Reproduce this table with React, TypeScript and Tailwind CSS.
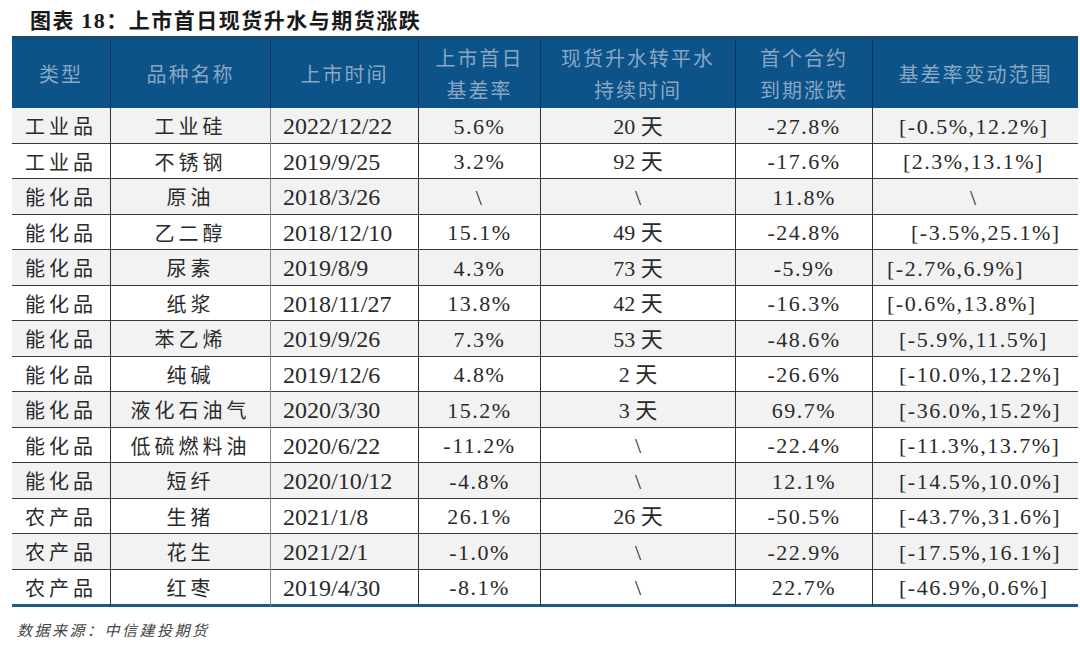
import React from 'react'

const rows = [
  ['工业品', '工业硅', '2022/12/22', '5.6%', '20 天', '-27.8%', '[-0.5%,12.2%]', 'pl-[26px]'],
  ['工业品', '不锈钢', '2019/9/25', '3.2%', '92 天', '-17.6%', '[2.3%,13.1%]', 'pl-[30px]'],
  ['能化品', '原油', '2018/3/26', '\\', '\\', '11.8%', '\\', 'pl-[97px]'],
  ['能化品', '乙二醇', '2018/12/10', '15.1%', '49 天', '-24.8%', '[-3.5%,25.1%]', 'pl-[38px]'],
  ['能化品', '尿素', '2019/8/9', '4.3%', '73 天', '-5.9%', '[-2.7%,6.9%]', 'pl-[14px]'],
  ['能化品', '纸浆', '2018/11/27', '13.8%', '42 天', '-16.3%', '[-0.6%,13.8%]', 'pl-[14px]'],
  ['能化品', '苯乙烯', '2019/9/26', '7.3%', '53 天', '-48.6%', '[-5.9%,11.5%]', 'pl-[26px]'],
  ['能化品', '纯碱', '2019/12/6', '4.8%', '2 天', '-26.6%', '[-10.0%,12.2%]', 'pl-[26px]'],
  ['能化品', '液化石油气', '2020/3/30', '15.2%', '3 天', '69.7%', '[-36.0%,15.2%]', 'pl-[26px]'],
  ['能化品', '低硫燃料油', '2020/6/22', '-11.2%', '\\', '-22.4%', '[-11.3%,13.7%]', 'pl-[26px]'],
  ['能化品', '短纤', '2020/10/12', '-4.8%', '\\', '12.1%', '[-14.5%,10.0%]', 'pl-[26px]'],
  ['农产品', '生猪', '2021/1/8', '26.1%', '26 天', '-50.5%', '[-43.7%,31.6%]', 'pl-[26px]'],
  ['农产品', '花生', '2021/2/1', '-1.0%', '\\', '-22.9%', '[-17.5%,16.1%]', 'pl-[26px]'],
  ['农产品', '红枣', '2019/4/30', '-8.1%', '\\', '22.7%', '[-46.9%,0.6%]', 'pl-[26px]'],
]

const cols = 'grid grid-cols-[98px_160px_148px_122px_195px_137px_206px]'
const cjk = "font-['Noto_Sans_CJK_SC',sans-serif]"
const num = "font-['Liberation_Serif','Noto_Sans_CJK_SC',serif]"

export default function App() {
  return (
    <div className="h-[647px] w-[1080px] bg-white text-[#2a2a2a]">
      <div className={`pl-[30px] pt-[5px] h-[36px] text-[21px] font-bold leading-[28px] tracking-[1.5px] text-[#1a1a1a] ${cjk}`}>
        图表 <span className="font-['Liberation_Serif',serif] text-[22px]">18</span>：上市首日现货升水与期货涨跌
      </div>

      <div className="ml-[12px] w-[1066px]">
        <div className={`${cols} h-[72px] border-t-[3px] border-[#1d4a70] bg-[#0b5388] text-[20px] leading-[32px] tracking-[2px] text-[#8aa6c2] ${cjk}`}>
          <div className="flex items-center justify-center">类型</div>
          <div className="flex items-center justify-center border-l border-[#0a3558]">品种名称</div>
          <div className="flex items-center justify-center border-l border-[#0a3558]">上市时间</div>
          <div className="flex items-center justify-center border-l border-[#0a3558] text-center">上市首日<br />基差率</div>
          <div className="flex items-center justify-center border-l border-[#0a3558] text-center">现货升水转平水<br />持续时间</div>
          <div className="flex items-center justify-center border-l border-[#0a3558] text-center">首个合约<br />到期涨跌</div>
          <div className="flex items-center justify-center border-l border-[#0a3558]">基差率变动范围</div>
        </div>

        {rows.map((r, i) => (
          <div
            key={i}
            className={`${cols} ${i === rows.length - 1 ? 'h-[37.5px] border-b-[3px] border-[#1d5a88]' : 'h-[35.5px] border-b border-[#3a3a3a]'} ${
              i % 2 === 0 ? 'bg-[#f2f2f2]' : 'bg-white'
            } text-[20px]`}
          >
            <div className={`flex items-center justify-center tracking-[4px] ${cjk}`}>{r[0]}</div>
            <div className={`flex items-center justify-center border-l border-[#333] tracking-[4px] ${cjk}`}>{r[1]}</div>
            <div className={`flex items-center border-l border-[#888] pl-[12px] text-[24px] ${num}`}>{r[2]}</div>
            <div className={`flex items-center justify-center border-l border-[#333] text-[22px] tracking-[1.5px] ${num}`}>{r[3]}</div>
            <div className={`flex items-center justify-center border-l border-[#333] text-[22px] ${num}`}>{r[4]}</div>
            <div className={`flex items-center justify-center border-l border-[#333] text-[22px] tracking-[1.5px] ${num}`}>{r[5]}</div>
            <div className={`flex items-center border-l border-[#333] ${r[7]} text-[22px] tracking-[1.5px] ${num}`}>{r[6]}</div>
          </div>
        ))}
      </div>

      <div className={`pl-[17px] pt-[12px] text-[15px] italic tracking-[2.5px] text-[#444] ${cjk}`}>
        数据来源：中信建投期货
      </div>
    </div>
  )
}
